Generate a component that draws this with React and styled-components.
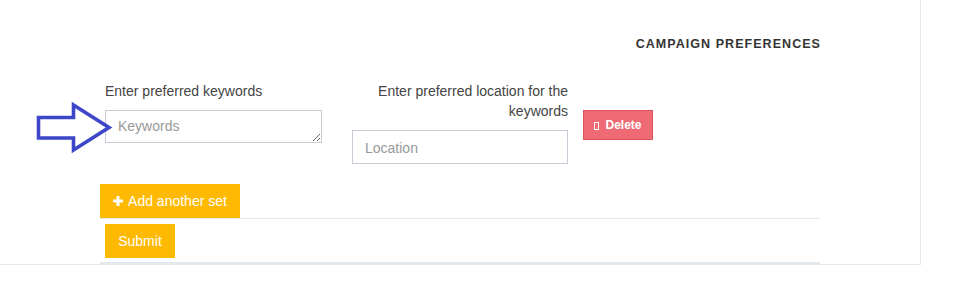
import React from 'react';
import styled, { createGlobalStyle } from 'styled-components';

const GlobalStyle = createGlobalStyle`
  body {
    margin: 0;
    background: #fff;
    font-family: 'Liberation Sans', Arial, sans-serif;
  }
`;

const Card = styled.div`
  position: relative;
  box-sizing: border-box;
  width: 921px;
  padding: 36px 0 0 100px;
  border-right: 1px solid #e6e8ea;
  border-bottom: 1px solid #e6e9ec;
  background: #fff;
`;

const Section = styled.section`
  width: 720px;
`;

const Title = styled.h4`
  margin: 0 -1px 0 0;
  text-align: right;
  font-size: 12.5px;
  line-height: 16px;
  font-weight: 700;
  letter-spacing: 1.05px;
  color: #333;
  text-transform: uppercase;
`;

const SetRow = styled.div`
  display: flex;
  align-items: flex-start;
  margin-top: 29px;
  padding-left: 5px;
`;

const Field = styled.div`
  width: ${(p) => p.width}px;
  margin-left: ${(p) => p.offset || 0}px;
  text-align: ${(p) => p.align || 'left'};
`;

const Label = styled.label`
  display: block;
  margin-bottom: 9px;
  font-size: 14px;
  line-height: 20px;
  color: #444;
`;

const inputBase = `
  display: block;
  box-sizing: border-box;
  width: 100%;
  border: 1px solid #c6ccd5;
  border-radius: 0;
  padding: 7px 12px 6px;
  font-family: 'Liberation Sans', Arial, sans-serif;
  font-size: 14px;
  color: #333;
  background: #fff;
  outline: none;
  &::placeholder {
    color: #999;
  }
`;

const TextArea = styled.textarea`
  ${inputBase}
  height: 33px;
  margin-top: 2px;
  resize: vertical;
`;

const Input = styled.input`
  ${inputBase}
  height: 34px;
  text-align: left;
`;

const DeleteButton = styled.button`
  display: flex;
  align-items: center;
  justify-content: center;
  gap: 6px;
  box-sizing: border-box;
  width: 70px;
  height: 30px;
  margin: 29px 0 0 15px;
  border: 1px solid #e0525d;
  background: #ee6b75;
  color: #fff;
  font-family: 'Liberation Sans', Arial, sans-serif;
  font-size: 12px;
  font-weight: 700;
  padding: 0;
`;

const Tofu = styled.span`
  display: inline-block;
  box-sizing: border-box;
  width: 5px;
  height: 8px;
  border: 1px solid #fff;
  margin-top: 1px;
`;

const YellowButton = styled.button`
  display: flex;
  align-items: center;
  justify-content: center;
  gap: 5px;
  box-sizing: border-box;
  height: 34px;
  width: ${(p) => p.width}px;
  margin: ${(p) => p.margin};
  border: none;
  background: #ffb900;
  color: #fff;
  font-family: 'Liberation Sans', Arial, sans-serif;
  font-size: 14px;
  padding: 0;
`;

const Divider = styled.div`
  height: ${(p) => p.size}px;
  background: #e4e9ee;
`;

const Annotation = styled.svg`
  position: absolute;
  left: 36px;
  top: 102px;
  overflow: visible;
`;

const Plus = () => (
  <svg width="10" height="10" viewBox="0 0 10 10">
    <path d="M3.5 0h3v3.5H10v3H6.5V10h-3V6.5H0v-3h3.5z" fill="#fff" />
  </svg>
);

export default function App() {
  return (
    <>
      <GlobalStyle />
      <Card>
        <Section>
          <Title>Campaign Preferences</Title>
          <SetRow>
            <Field width={217}>
              <Label>Enter preferred keywords</Label>
              <TextArea placeholder="Keywords" />
            </Field>
            <Field width={216} offset={30} align="right">
              <Label>Enter preferred location for the keywords</Label>
              <Input placeholder="Location" />
            </Field>
            <DeleteButton>
              <Tofu />
              Delete
            </DeleteButton>
          </SetRow>
          <YellowButton width={140} margin="20px 0 0 0">
            <Plus />
            Add another set
          </YellowButton>
          <Divider size={1} />
          <YellowButton width={70} margin="5px 0 4px 5px">
            Submit
          </YellowButton>
          <Divider size={2} />
        </Section>
        <Annotation width="76" height="52" viewBox="0 0 76 52">
          <polygon
            points="2.5,15.5 37.5,15.5 37.5,3 73,25.5 37.5,48 37.5,36 2.5,36"
            fill="none"
            stroke="#3d46c9"
            strokeWidth="3.6"
          />
        </Annotation>
      </Card>
    </>
  );
}
